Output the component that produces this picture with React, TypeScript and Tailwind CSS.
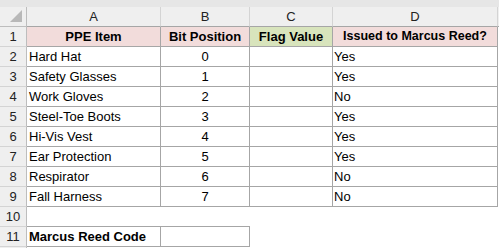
import React from 'react';

const rows = [
  { item: 'Hard Hat', bit: '0', issued: 'Yes' },
  { item: 'Safety Glasses', bit: '1', issued: 'Yes' },
  { item: 'Work Gloves', bit: '2', issued: 'No' },
  { item: 'Steel-Toe Boots', bit: '3', issued: 'Yes' },
  { item: 'Hi-Vis Vest', bit: '4', issued: 'Yes' },
  { item: 'Ear Protection', bit: '5', issued: 'Yes' },
  { item: 'Respirator', bit: '6', issued: 'No' },
  { item: 'Fall Harness', bit: '7', issued: 'No' },
];

const cellBorder = 'border-r border-b border-[#a6a6a6]';

const RowHead = ({ n }: { n: number }) => (
  <div className="w-[27px] h-[20px] shrink-0 flex items-center justify-center bg-[#efefef] border-r border-r-[#bdbdbd] border-b border-b-[#d4d4d4] text-[#222]">
    {n}
  </div>
);

export default function App() {
  return (
    <div
      className="w-[499px] h-[248px] bg-white overflow-hidden text-[13px] text-black"
      style={{ fontFamily: '"Liberation Sans", Arial, sans-serif' }}
    >
      {/* strip above column headers */}
      <div className="h-[7px] bg-[#e6e6e6]" />

      {/* column letters */}
      <div className="flex h-[20px] bg-[#efefef] text-[#222]">
        <div className="w-[27px] shrink-0 relative border-r border-b border-[#bdbdbd]">
          <div className="absolute right-[4px] bottom-[4px] w-0 h-0 border-l-[12px] border-l-transparent border-b-[12px] border-b-[#b8b8b8]" />
        </div>
        <div className="w-[134px] shrink-0 flex items-center justify-center border-r border-r-[#d4d4d4] border-b border-b-[#a6a6a6]">A</div>
        <div className="w-[89px] shrink-0 flex items-center justify-center border-r border-r-[#d4d4d4] border-b border-b-[#a6a6a6]">B</div>
        <div className="w-[83px] shrink-0 flex items-center justify-center border-r border-r-[#d4d4d4] border-b border-b-[#a6a6a6]">C</div>
        <div className="w-[165px] shrink-0 flex items-center justify-center border-r border-r-[#d4d4d4] border-b border-b-[#a6a6a6]">D</div>
        <div className="flex-1 border-b border-b-[#a6a6a6]" />
      </div>

      {/* row 1: headers */}
      <div className="flex h-[20px] font-bold">
        <div className="w-[27px] h-[20px] shrink-0 flex items-center justify-center bg-[#efefef] border-r border-r-[#bdbdbd] border-b border-b-[#d4d4d4] text-[#222] font-normal">1</div>
        <div className={`w-[134px] shrink-0 flex items-center justify-center bg-[#f2dcdb] ${cellBorder}`}>PPE Item</div>
        <div className={`w-[89px] shrink-0 flex items-center justify-center bg-[#f2dcdb] ${cellBorder}`}>Bit Position</div>
        <div className={`w-[83px] shrink-0 flex items-center justify-center bg-[#d8e4bc] ${cellBorder}`}>Flag Value</div>
        <div className={`w-[165px] shrink-0 flex items-center justify-center bg-[#f2dcdb] text-[12.5px] ${cellBorder}`}>Issued to Marcus Reed?</div>
      </div>

      {rows.map((r, i) => (
        <div key={r.item} className="flex h-[20px]">
          <RowHead n={i + 2} />
          <div className={`w-[134px] shrink-0 flex items-center pl-[2px] ${cellBorder}`}>{r.item}</div>
          <div className={`w-[89px] shrink-0 flex items-center justify-center ${cellBorder}`}>{r.bit}</div>
          <div className={`w-[83px] shrink-0 ${cellBorder}`} />
          <div className={`w-[165px] shrink-0 flex items-center pl-[1px] ${cellBorder}`}>{r.issued}</div>
        </div>
      ))}

      {/* row 10 */}
      <div className="flex h-[20px]">
        <RowHead n={10} />
        <div className="w-[134px] shrink-0 border-b border-[#a6a6a6]" />
        <div className="w-[89px] shrink-0 border-b border-[#a6a6a6]" />
      </div>

      {/* row 11 */}
      <div className="flex h-[20px]">
        <RowHead n={11} />
        <div className={`w-[134px] shrink-0 flex items-center pl-[2px] font-bold ${cellBorder}`}>Marcus Reed Code</div>
        <div className={`w-[89px] shrink-0 ${cellBorder}`} />
      </div>

      <div className="flex h-[1px]">
        <div className="w-[27px] shrink-0 bg-[#efefef] border-r border-r-[#bdbdbd]" />
      </div>
    </div>
  );
}
